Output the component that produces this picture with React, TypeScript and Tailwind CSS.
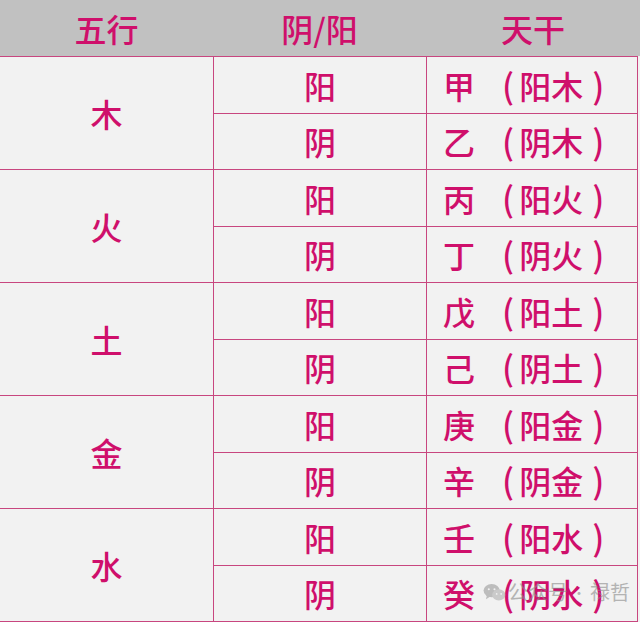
import React from 'react';

const ROWS = [
  { el: '木', stems: [['甲', '阳木'], ['乙', '阴木']] },
  { el: '火', stems: [['丙', '阳火'], ['丁', '阴火']] },
  { el: '土', stems: [['戊', '阳土'], ['己', '阴土']] },
  { el: '金', stems: [['庚', '阳金'], ['辛', '阴金']] },
  { el: '水', stems: [['壬', '阳水'], ['癸', '阴水']] },
];

const font = { fontFamily: '"Noto Sans CJK SC", "Noto Sans", sans-serif' };

function Cell({ children, className = '' }: { children: React.ReactNode; className?: string }) {
  return (
    <div className={`bg-[#f2f2f2] flex items-center justify-center text-[32px] leading-none font-medium text-[#cf0f6b] ${className}`}>
      {children}
    </div>
  );
}

function Stem({ gan, label }: { gan: string; label: string }) {
  return (
    <div className="bg-[#f2f2f2] flex items-center pl-[16px] text-[32px] leading-none font-medium text-[#cf0f6b] whitespace-nowrap">
      <span>{gan}</span>
      <span className="ml-[27px] text-[34px]">(</span>
      <span className="ml-[5px]">{label}</span>
      <span className="ml-[9px] text-[34px]">)</span>
    </div>
  );
}

export default function App() {
  return (
    <div className="relative w-[640px] h-[622px] bg-[#f2f2f2] overflow-hidden" style={font}>
      {/* header */}
      <div className="h-[56px] bg-[#c1c1c1] grid grid-cols-[213px_213px_214px] text-[32px] leading-none font-medium text-[#cf0f6b]">
        <div className="flex items-center justify-center">五行</div>
        <div className="flex items-center justify-center">阴/阳</div>
        <div className="flex items-center justify-center">天干</div>
      </div>

      {/* body */}
      <div className="w-[638px] h-[566px] bg-[#c8467f] pt-px pb-px pr-px grid grid-cols-[213px_212px_210px] grid-rows-[repeat(10,1fr)] gap-px">
        {ROWS.map((r) => (
          <React.Fragment key={r.el}>
            <Cell className="row-span-2">{r.el}</Cell>
            <Cell>阳</Cell>
            <Stem gan={r.stems[0][0]} label={r.stems[0][1]} />
            <Cell>阴</Cell>
            <Stem gan={r.stems[1][0]} label={r.stems[1][1]} />
          </React.Fragment>
        ))}
      </div>

      {/* watermark */}
      <div className="absolute left-[483px] top-[582px] flex items-center whitespace-nowrap text-[20px] leading-none text-[#8a8a8a] opacity-60">
        <svg width="23" height="19" viewBox="0 0 24 20" fill="#9a9a9a">
          <ellipse cx="9" cy="8" rx="8.5" ry="7" />
          <path d="M4 13 L3 17 L8 14 Z" />
          <ellipse cx="16.5" cy="12.5" rx="7" ry="5.8" fill="#b0b0b0" />
          <circle cx="6" cy="6.5" r="1.1" fill="#f2f2f2" />
          <circle cx="12" cy="6.5" r="1.1" fill="#f2f2f2" />
          <circle cx="14.3" cy="11.5" r="0.9" fill="#f2f2f2" />
          <circle cx="19" cy="11.5" r="0.9" fill="#f2f2f2" />
        </svg>
        <span className="ml-[2px]">公众号</span>
        <span className="mx-[4px] text-[14px]">·</span>
        <span>禄哲</span>
      </div>
    </div>
  );
}
